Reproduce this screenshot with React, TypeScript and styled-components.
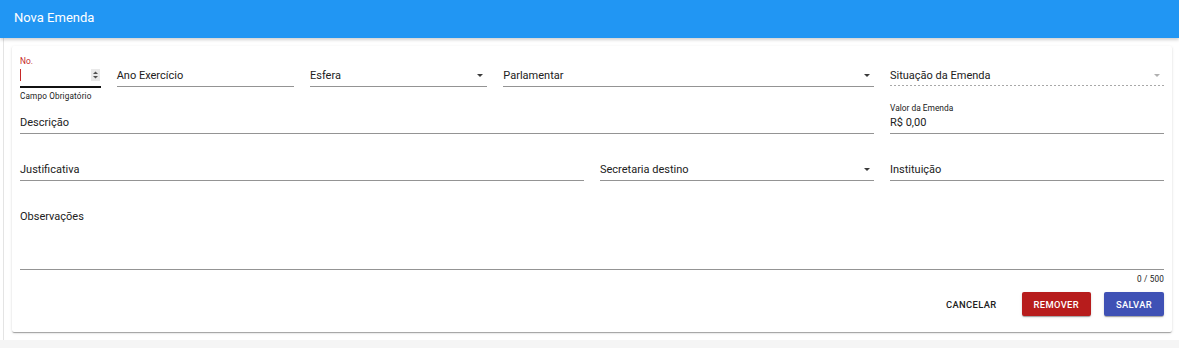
import React from 'react'
import styled, { createGlobalStyle } from 'styled-components'

const GlobalStyle = createGlobalStyle`
  html, body {
    margin: 0;
    padding: 0;
    background: #f5f5f5;
    font-family: Roboto, 'Noto Sans', 'Liberation Sans', sans-serif;
    color: #212121;
  }
  * {
    box-sizing: border-box;
  }
`

type UnderlineKind = 'normal' | 'focused' | 'disabled'

const Page = styled.div`
  width: 100%;
  display: flex;
  flex-direction: column;
`

const Header = styled.header`
  height: 38px;
  background: #2196f3;
  display: flex;
  align-items: center;
  padding: 0 14px 3px;
  color: #fff;
  font-size: 13px;
  font-weight: 400;
  box-shadow: 0 2px 3px rgba(0, 0, 0, 0.18);
  position: relative;
  z-index: 1;
`

const Body = styled.div`
  display: flex;
  background: #fff;
`

const Rail = styled.div`
  width: 4px;
  border-right: 1px solid #e4e4e4;
`

const Main = styled.main`
  flex: 1;
  padding: 8px 7px 8px 8px;
`

const Card = styled.section`
  background: #fff;
  border-radius: 2px;
  padding: 10px 8px 16px;
  box-shadow: 0 2px 1px -1px rgba(0, 0, 0, 0.2), 0 1px 1px 0 rgba(0, 0, 0, 0.14),
    0 1px 3px 0 rgba(0, 0, 0, 0.12);
`

const Grid = styled.div`
  display: grid;
  grid-template-columns: repeat(12, 1fr);
  column-gap: 16px;
`

const Field = styled.div<{ $span: number }>`
  grid-column: span ${(p) => p.$span};
  display: flex;
  flex-direction: column;
  min-width: 0;
`

const FloatLabel = styled.div<{ $error?: boolean }>`
  height: 11px;
  font-size: 8.4px;
  line-height: 11px;
  color: ${(p) => (p.$error ? '#c62828' : '#212121')};
  white-space: nowrap;
`

const InputRow = styled.div<{ $kind: UnderlineKind; $height: number }>`
  position: relative;
  height: ${(p) => p.$height + 1}px;
  border-bottom: ${(p) =>
    p.$kind === 'disabled'
      ? '1px solid transparent'
      : `1px solid ${p.$kind === 'focused' ? '#111' : '#949494'}`};
  box-shadow: ${(p) => (p.$kind === 'focused' ? '0 1px 0 #111' : 'none')};
  background-image: ${(p) =>
    p.$kind === 'disabled'
      ? 'repeating-linear-gradient(to right, #a8a8a8 0 2px, transparent 2px 4px)'
      : 'none'};
  background-size: 100% 1px;
  background-repeat: no-repeat;
  background-position: left bottom;
`

const Value = styled.div`
  font-size: 11px;
  line-height: 17px;
  color: #212121;
  white-space: nowrap;
`

const Details = styled.div<{ $align?: 'left' | 'right'; $height: number }>`
  height: ${(p) => p.$height}px;
  padding-top: 3px;
  font-size: 8.2px;
  line-height: 12px;
  letter-spacing: 0.15px;
  text-align: ${(p) => p.$align || 'left'};
  color: #212121;
  white-space: nowrap;
`

const Arrow = styled.svg<{ $muted?: boolean }>`
  position: absolute;
  right: 4px;
  top: 7px;
  width: 6px;
  height: 3px;
  fill: ${(p) => (p.$muted ? '#b0b0b0' : '#3a3a3a')};
`

const Caret = styled.span`
  position: absolute;
  left: 0;
  top: 2px;
  width: 1px;
  height: 12px;
  background: #c62828;
`

const Spinner = styled.svg`
  position: absolute;
  right: 1px;
  top: 2px;
  width: 9px;
  height: 12px;
`

const Actions = styled.div`
  display: flex;
  justify-content: flex-end;
  gap: 13px;
  padding-top: 6px;
`

const Button = styled.button<{ $tone: 'flat' | 'red' | 'blue' }>`
  height: 24px;
  padding: 0 12px;
  border: 0;
  border-radius: 2px;
  font-family: Roboto, 'Liberation Sans', sans-serif;
  font-size: 9.4px;
  font-weight: 500;
  letter-spacing: 0.35px;
  text-transform: uppercase;
  color: ${(p) => (p.$tone === 'flat' ? '#212121' : '#fff')};
  background: ${(p) =>
    p.$tone === 'red' ? '#b71c1c' : p.$tone === 'blue' ? '#3f51b5' : 'transparent'};
  box-shadow: ${(p) =>
    p.$tone === 'flat'
      ? 'none'
      : '0 2px 1px -1px rgba(0,0,0,.2), 0 1px 1px 0 rgba(0,0,0,.14), 0 1px 3px 0 rgba(0,0,0,.12)'};
`

const DropArrow: React.FC<{ muted?: boolean }> = ({ muted }) => (
  <Arrow $muted={muted} viewBox="0 0 6 3">
    <polygon points="0,0 6,0 3,3" />
  </Arrow>
)

interface TextFieldProps {
  span: number
  label: string
  value?: string
  select?: boolean
  disabled?: boolean
}

const TextField: React.FC<TextFieldProps> = ({ span, label, value, select, disabled }) => (
  <Field $span={span}>
    <FloatLabel>{value ? label : ''}</FloatLabel>
    <InputRow $kind={disabled ? 'disabled' : 'normal'} $height={19}>
      <Value>{value || label}</Value>
      {select && <DropArrow muted={disabled} />}
    </InputRow>
    <Details $height={16} />
  </Field>
)

export default function App() {
  return (
    <Page>
      <GlobalStyle />
      <Header>Nova Emenda</Header>
      <Body>
        <Rail />
        <Main>
          <Card>
            <Grid>
              <Field $span={1}>
                <FloatLabel $error>No.</FloatLabel>
                <InputRow $kind="focused" $height={19}>
                  <Caret />
                  <Spinner viewBox="0 0 9 12">
                    <rect width="9" height="12" fill="#e9e9e9" />
                    <polygon points="2,5 7,5 4.5,2.5" fill="#505050" />
                    <polygon points="2,7 7,7 4.5,9.5" fill="#505050" />
                  </Spinner>
                </InputRow>
                <Details $height={16}>Campo Obrigatório</Details>
              </Field>
              <TextField span={2} label="Ano Exercício" />
              <TextField span={2} label="Esfera" select />
              <TextField span={4} label="Parlamentar" select />
              <TextField span={3} label="Situação da Emenda" select disabled />

              <TextField span={9} label="Descrição" />
              <TextField span={3} label="Valor da Emenda" value="R$ 0,00" />

              <TextField span={6} label="Justificativa" />
              <TextField span={3} label="Secretaria destino" select />
              <TextField span={3} label="Instituição" />

              <Field $span={12}>
                <FloatLabel />
                <InputRow $kind="normal" $height={61}>
                  <Value>Observações</Value>
                </InputRow>
                <Details $height={16} $align="right">
                  0 / 500
                </Details>
              </Field>
            </Grid>
            <Actions>
              <Button $tone="flat">Cancelar</Button>
              <Button $tone="red">Remover</Button>
              <Button $tone="blue">Salvar</Button>
            </Actions>
          </Card>
        </Main>
      </Body>
    </Page>
  )
}
